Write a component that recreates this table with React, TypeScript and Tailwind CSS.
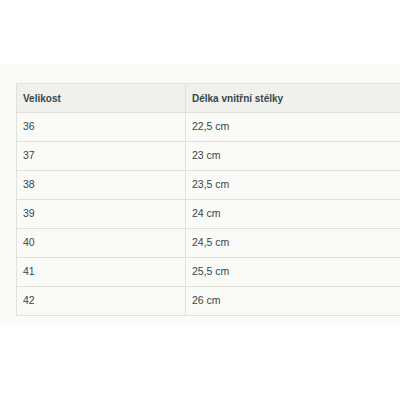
import React from "react";

const rows = [
  ["36", "22,5 cm"],
  ["37", "23 cm"],
  ["38", "23,5 cm"],
  ["39", "24 cm"],
  ["40", "24,5 cm"],
  ["41", "25,5 cm"],
  ["42", "26 cm"],
];

export default function App() {
  return (
    <div
      className="w-[400px] h-[400px] bg-white overflow-hidden"
      style={{ fontFamily: "'Liberation Sans', Arial, sans-serif" }}
    >
      <div className="mt-[64px] bg-[#fafaf6] pt-[19px] pb-[9px] pl-4 overflow-hidden">
        <table className="w-[560px] border-collapse text-[10.5px] text-[#36474d]">
          <thead>
            <tr className="bg-[#f0f0ed] h-[29px]">
              <th className="w-[169px] border border-[#e0e0dc] px-[6px] text-left font-bold text-[10px]">
                Velikost
              </th>
              <th className="border border-[#e0e0dc] px-[6px] text-left font-bold text-[10px]">
                Délka vnitřní stélky
              </th>
            </tr>
          </thead>
          <tbody>
            {rows.map(([size, len]) => (
              <tr key={size} className="h-[29px]">
                <td className="border border-[#e0e0dc] px-[6px]">{size}</td>
                <td className="border border-[#e0e0dc] px-[6px]">{len}</td>
              </tr>
            ))}
          </tbody>
        </table>
      </div>
    </div>
  );
}
